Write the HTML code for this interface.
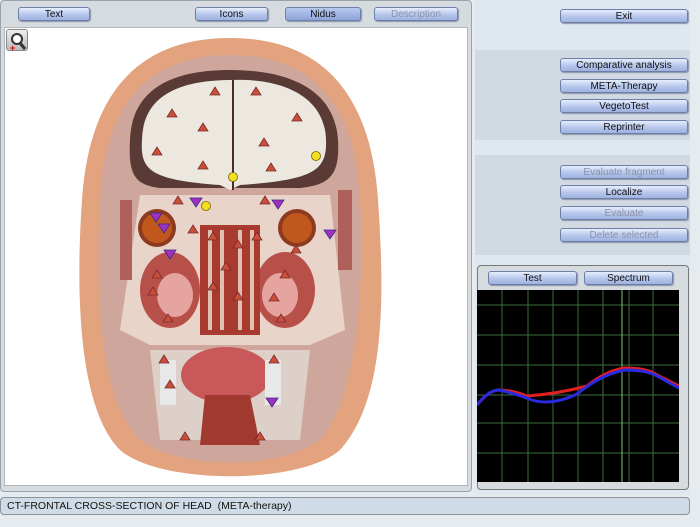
<!DOCTYPE html>
<html><head><style>
*{margin:0;padding:0;box-sizing:border-box}
body{width:700px;height:527px;background:#e6ebf0;font-family:"Liberation Sans",sans-serif;position:relative;overflow:hidden}
.btn{position:absolute;height:14px;border:1px solid #6d7fa6;border-radius:3px;background:linear-gradient(#e6eefc,#b6c6ec 55%,#9fb2e0);font-size:10px;line-height:13px;text-align:center;color:#111;box-shadow:1px 1px 1px #8a93a8}
.dis{color:#8a93a8}
.dark{background:linear-gradient(#b8c8ee,#8ea4d8)}
</style></head><body>
<div style="position:absolute;left:0;top:0;width:472px;height:492px;background:#d6dbe0;border:1px solid #9aa2ab;border-radius:4px"></div>
<div style="position:absolute;left:4px;top:27px;width:464px;height:459px;background:#fff;border:1px solid #b0b6bc"></div>
<div class="btn" style="left:18px;top:7px;width:72px">Text</div>
<div class="btn" style="left:195px;top:7px;width:73px">Icons</div>
<div class="btn dark" style="left:285px;top:7px;width:76px">Nidus</div>
<div class="btn dis" style="left:374px;top:7px;width:84px">Description</div>
<div style="position:absolute;left:6px;top:29px;width:22px;height:22px;border:1px solid #888;border-radius:3px;background:linear-gradient(#eee,#bbb)"><svg width="22" height="22"><circle cx="10" cy="9" r="5" fill="#fff" stroke="#333" stroke-width="2"/><line x1="13" y1="13" x2="18" y2="19" stroke="#333" stroke-width="3"/><text x="3" y="21" font-size="9" fill="#d00" font-weight="bold">+</text></svg></div>
<div style="position:absolute;left:475px;top:0;width:215px;height:50px;background:#dfe7f1"></div>
<div style="position:absolute;left:475px;top:50px;width:215px;height:90px;background:#d1d9e2"></div>
<div style="position:absolute;left:475px;top:140px;width:215px;height:15px;background:#dfe7f1"></div>
<div style="position:absolute;left:475px;top:155px;width:215px;height:100px;background:#d1d9e2"></div>
<div style="position:absolute;left:475px;top:255px;width:215px;height:240px;background:#dfe7f1"></div>
<div class="btn" style="left:560px;top:9px;width:128px">Exit</div>
<div class="btn" style="left:560px;top:58px;width:128px">Comparative analysis</div>
<div class="btn" style="left:560px;top:79px;width:128px">META-Therapy</div>
<div class="btn" style="left:560px;top:99px;width:128px">VegetoTest</div>
<div class="btn" style="left:560px;top:120px;width:128px">Reprinter</div>
<div class="btn dis" style="left:560px;top:165px;width:128px">Evaluate fragment</div>
<div class="btn" style="left:560px;top:185px;width:128px">Localize</div>
<div class="btn dis" style="left:560px;top:206px;width:128px">Evaluate</div>
<div class="btn dis" style="left:560px;top:228px;width:128px">Delete selected</div>
<div style="position:absolute;left:477px;top:265px;width:212px;height:225px;border:1px solid #777;border-radius:4px;background:#d6dbe0"></div>
<div class="btn" style="left:488px;top:271px;width:89px">Test</div>
<div class="btn" style="left:584px;top:271px;width:89px">Spectrum</div>
<svg style="position:absolute;left:477px;top:290px" width="202" height="192">
<rect width="202" height="192" fill="#000"/>
<g stroke="#3d6b3d" stroke-width="1">
<line x1="25" y1="0" x2="25" y2="192"/><line x1="51" y1="0" x2="51" y2="192"/><line x1="76" y1="0" x2="76" y2="192"/><line x1="101" y1="0" x2="101" y2="192"/><line x1="126" y1="0" x2="126" y2="192"/><line x1="152" y1="0" x2="152" y2="192"/><line x1="176" y1="0" x2="176" y2="192"/>
<line x1="0" y1="15" x2="202" y2="15"/><line x1="0" y1="45" x2="202" y2="45"/><line x1="0" y1="75" x2="202" y2="75"/><line x1="0" y1="105" x2="202" y2="105"/><line x1="0" y1="133" x2="202" y2="133"/><line x1="0" y1="163" x2="202" y2="163"/>
</g>
<line x1="145" y1="0" x2="145" y2="192" stroke="#7fbf7f"/>
<path d="M0 115 Q12 100 22 100 Q35 100 50 106 Q80 104 110 96 Q130 80 148 78 Q170 78 180 85 L202 96" fill="none" stroke="#e02020" stroke-width="3"/>
<path d="M0 115 Q12 100 22 100 Q40 104 55 110 Q75 116 100 104 Q125 84 148 80 Q170 80 180 86 L202 98" fill="none" stroke="#2a2ae0" stroke-width="3"/>
</svg>
<div style="position:absolute;left:0;top:497px;width:690px;height:18px;border:1px solid #8a939c;border-radius:4px;background:#cfdbe6;font-size:10.5px;line-height:16px;padding-left:6px;color:#111">CT-FRONTAL CROSS-SECTION OF HEAD&nbsp; (META-therapy)</div>
<svg style="position:absolute;left:0;top:0" width="470" height="490">
<path d="M230 38 C310 38 370 80 378 200 C385 300 385 400 340 450 C300 485 160 485 120 450 C80 410 75 300 82 200 C90 80 150 38 230 38Z" fill="#e3a37f"/>
<path d="M230 55 C300 55 355 90 360 200 C365 300 355 400 320 440 C280 470 180 470 140 440 C100 400 95 300 100 200 C105 90 160 55 230 55Z" fill="#cfa69c"/>
<path d="M230 70 C290 70 335 90 338 140 C340 175 330 185 300 188 L160 188 C135 185 128 175 130 140 C132 90 170 70 230 70Z" fill="#5a3a34"/>
<path d="M232 80 C280 78 325 95 326 140 C327 170 315 180 240 185 L230 190 L220 185 C150 180 140 170 142 140 C143 95 180 80 232 80Z" fill="#ece8df"/>
<line x1="233" y1="80" x2="233" y2="190" stroke="#4a2c28" stroke-width="2"/>
<path d="M140 195 L330 195 L345 330 L310 345 L150 345 L120 330Z" fill="#e8d4c8"/>
<circle cx="157" cy="228" r="19" fill="#8d3a1e"/><circle cx="157" cy="228" r="15" fill="#c0581e"/>
<circle cx="297" cy="228" r="19" fill="#8d3a1e"/><circle cx="297" cy="228" r="15" fill="#c0581e"/>
<ellipse cx="170" cy="290" rx="30" ry="38" fill="#b8504a"/><ellipse cx="175" cy="295" rx="18" ry="22" fill="#e6a4a0"/>
<ellipse cx="285" cy="290" rx="30" ry="38" fill="#b8504a"/><ellipse cx="280" cy="295" rx="18" ry="22" fill="#e6a4a0"/>
<rect x="200" y="225" width="60" height="110" fill="#a83a30"/>
<path d="M210 230 L210 330 M222 230 L222 330 M240 230 L240 330 M252 230 L252 330" stroke="#e0c0b0" stroke-width="4"/>
<path d="M150 350 L310 350 L300 440 L160 440Z" fill="#ddd0c8"/>
<ellipse cx="226" cy="375" rx="45" ry="28" fill="#c8585a"/>
<path d="M205 395 L250 395 L260 445 L200 445Z" fill="#a03a30"/>
<rect x="160" y="360" width="16" height="45" fill="#e8e8e8"/><rect x="265" y="360" width="16" height="45" fill="#e8e8e8"/>
<rect x="120" y="200" width="12" height="80" fill="#b0605a"/><rect x="338" y="190" width="14" height="80" fill="#b0605a"/>
<g fill="#c8503a" stroke="#7a2a2a" stroke-width=".8">
<path d="M215 87 l5 8 h-10z"/><path d="M256 87 l5 8 h-10z"/><path d="M172 109 l5 8 h-10z"/><path d="M203 123 l5 8 h-10z"/><path d="M297 113 l5 8 h-10z"/><path d="M264 138 l5 8 h-10z"/><path d="M157 147 l5 8 h-10z"/><path d="M203 161 l5 8 h-10z"/><path d="M271 163 l5 8 h-10z"/>
<path d="M178 196 l5 8 h-10z"/><path d="M265 196 l5 8 h-10z"/><path d="M193 225 l5 8 h-10z"/><path d="M213 232 l5 8 h-10z"/><path d="M238 240 l5 8 h-10z"/><path d="M257 232 l5 8 h-10z"/><path d="M226 262 l5 8 h-10z"/><path d="M213 282 l5 8 h-10z"/><path d="M238 292 l5 8 h-10z"/>
<path d="M157 270 l5 8 h-10z"/><path d="M153 287 l5 8 h-10z"/><path d="M168 314 l5 8 h-10z"/><path d="M285 270 l5 8 h-10z"/><path d="M274 293 l5 8 h-10z"/><path d="M281 314 l5 8 h-10z"/><path d="M296 245 l5 8 h-10z"/>
<path d="M164 355 l5 8 h-10z"/><path d="M274 355 l5 8 h-10z"/><path d="M170 380 l5 8 h-10z"/><path d="M185 432 l5 8 h-10z"/><path d="M260 432 l5 8 h-10z"/>
</g>
<g fill="#a030c0" stroke="#3a2a8a" stroke-width=".8">
<path d="M190 198 h12 l-6 9z"/><path d="M272 200 h12 l-6 9z"/><path d="M150 213 h12 l-6 9z"/><path d="M158 224 h12 l-6 9z"/><path d="M164 250 h12 l-6 9z"/><path d="M324 230 h12 l-6 9z"/><path d="M266 398 h12 l-6 9z"/>
</g>
<g fill="#f0e020" stroke="#806000" stroke-width=".8"><circle cx="316" cy="156" r="4.5"/><circle cx="233" cy="177" r="4.5"/><circle cx="206" cy="206" r="4.5"/></g>
</svg>
</body></html>
